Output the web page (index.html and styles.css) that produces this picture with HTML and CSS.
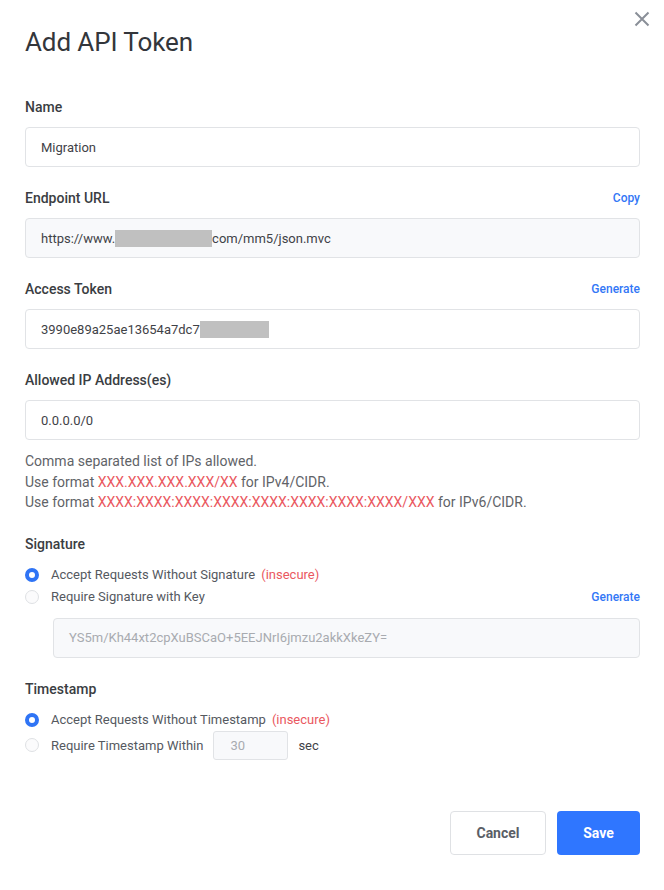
FILE: index.html
```html
<!DOCTYPE html>
<html>
<head>
<meta charset="utf-8">
<link rel="stylesheet" href="styles.css">
</head>
<body>
<div class="modal">
  <button class="close" aria-label="Close">
    <svg width="18" height="18" viewBox="0 0 18 18"><path d="M2.5 2.5 L15.5 15.5 M15.5 2.5 L2.5 15.5" stroke="#8a8f98" stroke-width="2" fill="none"/></svg>
  </button>
  <h1 class="title">Add API Token</h1>

  <div class="field">
    <div class="label-row"><span class="label">Name</span></div>
    <div class="input">Migration</div>
  </div>

  <div class="field">
    <div class="label-row"><span class="label">Endpoint URL</span><a class="link">Copy</a></div>
    <div class="input readonly">https://www.<span class="redact r1"></span>com/mm5/json.mvc</div>
  </div>

  <div class="field">
    <div class="label-row"><span class="label">Access Token</span><a class="link">Generate</a></div>
    <div class="input">3990e89a25ae13654a7dc7<span class="redact r2"></span></div>
  </div>

  <div class="field">
    <div class="label-row"><span class="label">Allowed IP Address(es)</span></div>
    <div class="input">0.0.0.0/0</div>
    <div class="help">
      <div>Comma separated list of IPs allowed.</div>
      <div>Use format <span class="red">XXX.XXX.XXX.XXX/XX</span> for IPv4/CIDR.</div>
      <div>Use format <span class="red">XXXX:XXXX:XXXX:XXXX:XXXX:XXXX:XXXX:XXXX/XXX</span> for IPv6/CIDR.</div>
    </div>
  </div>

  <div class="field">
    <div class="label-row"><span class="label">Signature</span></div>
    <div class="radio-row"><span class="radio on"></span><span class="rtext">Accept Requests Without Signature</span><span class="red ins">(insecure)</span></div>
    <div class="radio-row"><span class="radio"></span><span class="rtext">Require Signature with Key</span><a class="link push">Generate</a></div>
    <div class="input readonly key">YS5m/Kh44xt2cpXuBSCaO+5EEJNrI6jmzu2akkXkeZY=</div>
  </div>

  <div class="field ts">
    <div class="label-row"><span class="label">Timestamp</span></div>
    <div class="radio-row"><span class="radio on"></span><span class="rtext">Accept Requests Without Timestamp</span><span class="red ins">(insecure)</span></div>
    <div class="radio-row tall"><span class="radio"></span><span class="rtext">Require Timestamp Within</span><span class="small-input">30</span><span class="sec">sec</span></div>
  </div>

  <div class="actions">
    <button class="btn cancel">Cancel</button>
    <button class="btn save">Save</button>
  </div>
</div>
</body>
</html>
```

FILE: styles.css
```css
html, body {
  margin: 0;
  padding: 0;
  background: #fff;
}
body {
  font-family: Roboto, "Liberation Sans", sans-serif;
  color: #333;
  font-size: 13px;
}
.modal {
  position: relative;
  padding: 24px 24px 0 25px;
}
.close {
  position: absolute;
  top: 10px;
  right: 13px;
  border: 0;
  background: none;
  padding: 0;
  width: 18px;
  height: 18px;
  cursor: pointer;
}
.close svg { display: block; }
.title {
  margin: 0 0 37px 0;
  font-size: 26px;
  line-height: 36px;
  font-weight: 400;
  color: #33363b;
  letter-spacing: -0.1px;
}
.field { margin-bottom: 21px; }
.label-row {
  display: flex;
  align-items: center;
  justify-content: space-between;
  height: 20px;
  margin-bottom: 10px;
}
.label {
  font-size: 14px;
  font-weight: 500;
  color: #3a3d42;
}
.link {
  color: #3377f6;
  font-size: 12px;
  font-weight: 500;
  cursor: pointer;
}
.input {
  box-sizing: border-box;
  height: 40px;
  border: 1px solid #e1e3e6;
  border-radius: 4px;
  padding: 0 15px;
  display: flex;
  align-items: center;
  font-size: 13px;
  color: #3f4247;
  background: #fff;
}
.input.readonly { background: #f8f9fb; }
.redact {
  display: inline-block;
  height: 17px;
  background: #c0c0c0;
}
.r1 { width: 97px; }
.r2 { width: 69px; }
.help {
  margin-top: 11px;
  font-size: 14px;
  line-height: 20.5px;
  color: #5f6368;
}
.red { color: #ea5860; }
.radio-row {
  display: flex;
  align-items: center;
  height: 22px;
  font-size: 13px;
  color: #55595f;
}
.radio-row:first-of-type { margin-top: 1px; }
.radio-row.tall { height: 29px; }
.radio {
  box-sizing: border-box;
  width: 14px;
  height: 14px;
  border-radius: 50%;
  border: 1px solid #dfe1e4;
  background: #fbfbfc;
  margin: 0 12px 0 0;
  flex: none;
}
.radio.on {
  border: 4px solid #2f74f5;
  background: #fff;
}
.ins { margin-left: 6px; }
.push { margin-left: auto; }
.input.key {
  margin: 10px 0 0 28px;
  color: #a8abb0;
}
.field.ts { margin-bottom: 0; }
.small-input {
  box-sizing: border-box;
  width: 75px;
  height: 29px;
  border: 1px solid #e1e3e6;
  border-radius: 3px;
  background: #f8f9fb;
  color: #a8abb0;
  display: inline-flex;
  align-items: center;
  padding-left: 16px;
  margin-left: 10px;
}
.sec { margin-left: 10px; color: #3f4247; }
.actions {
  display: flex;
  justify-content: flex-end;
  gap: 11px;
  margin-top: 51px;
}
.btn {
  box-sizing: border-box;
  height: 44px;
  border-radius: 4px;
  font-family: Roboto, "Liberation Sans", sans-serif;
  font-size: 14px;
  font-weight: 700;
  cursor: pointer;
}
.cancel {
  width: 96px;
  border: 1px solid #dfe1e4;
  background: #fff;
  color: #5a5e66;
}
.save {
  width: 83px;
  border: 0;
  background: #2f76ff;
  color: #fff;
}
```
